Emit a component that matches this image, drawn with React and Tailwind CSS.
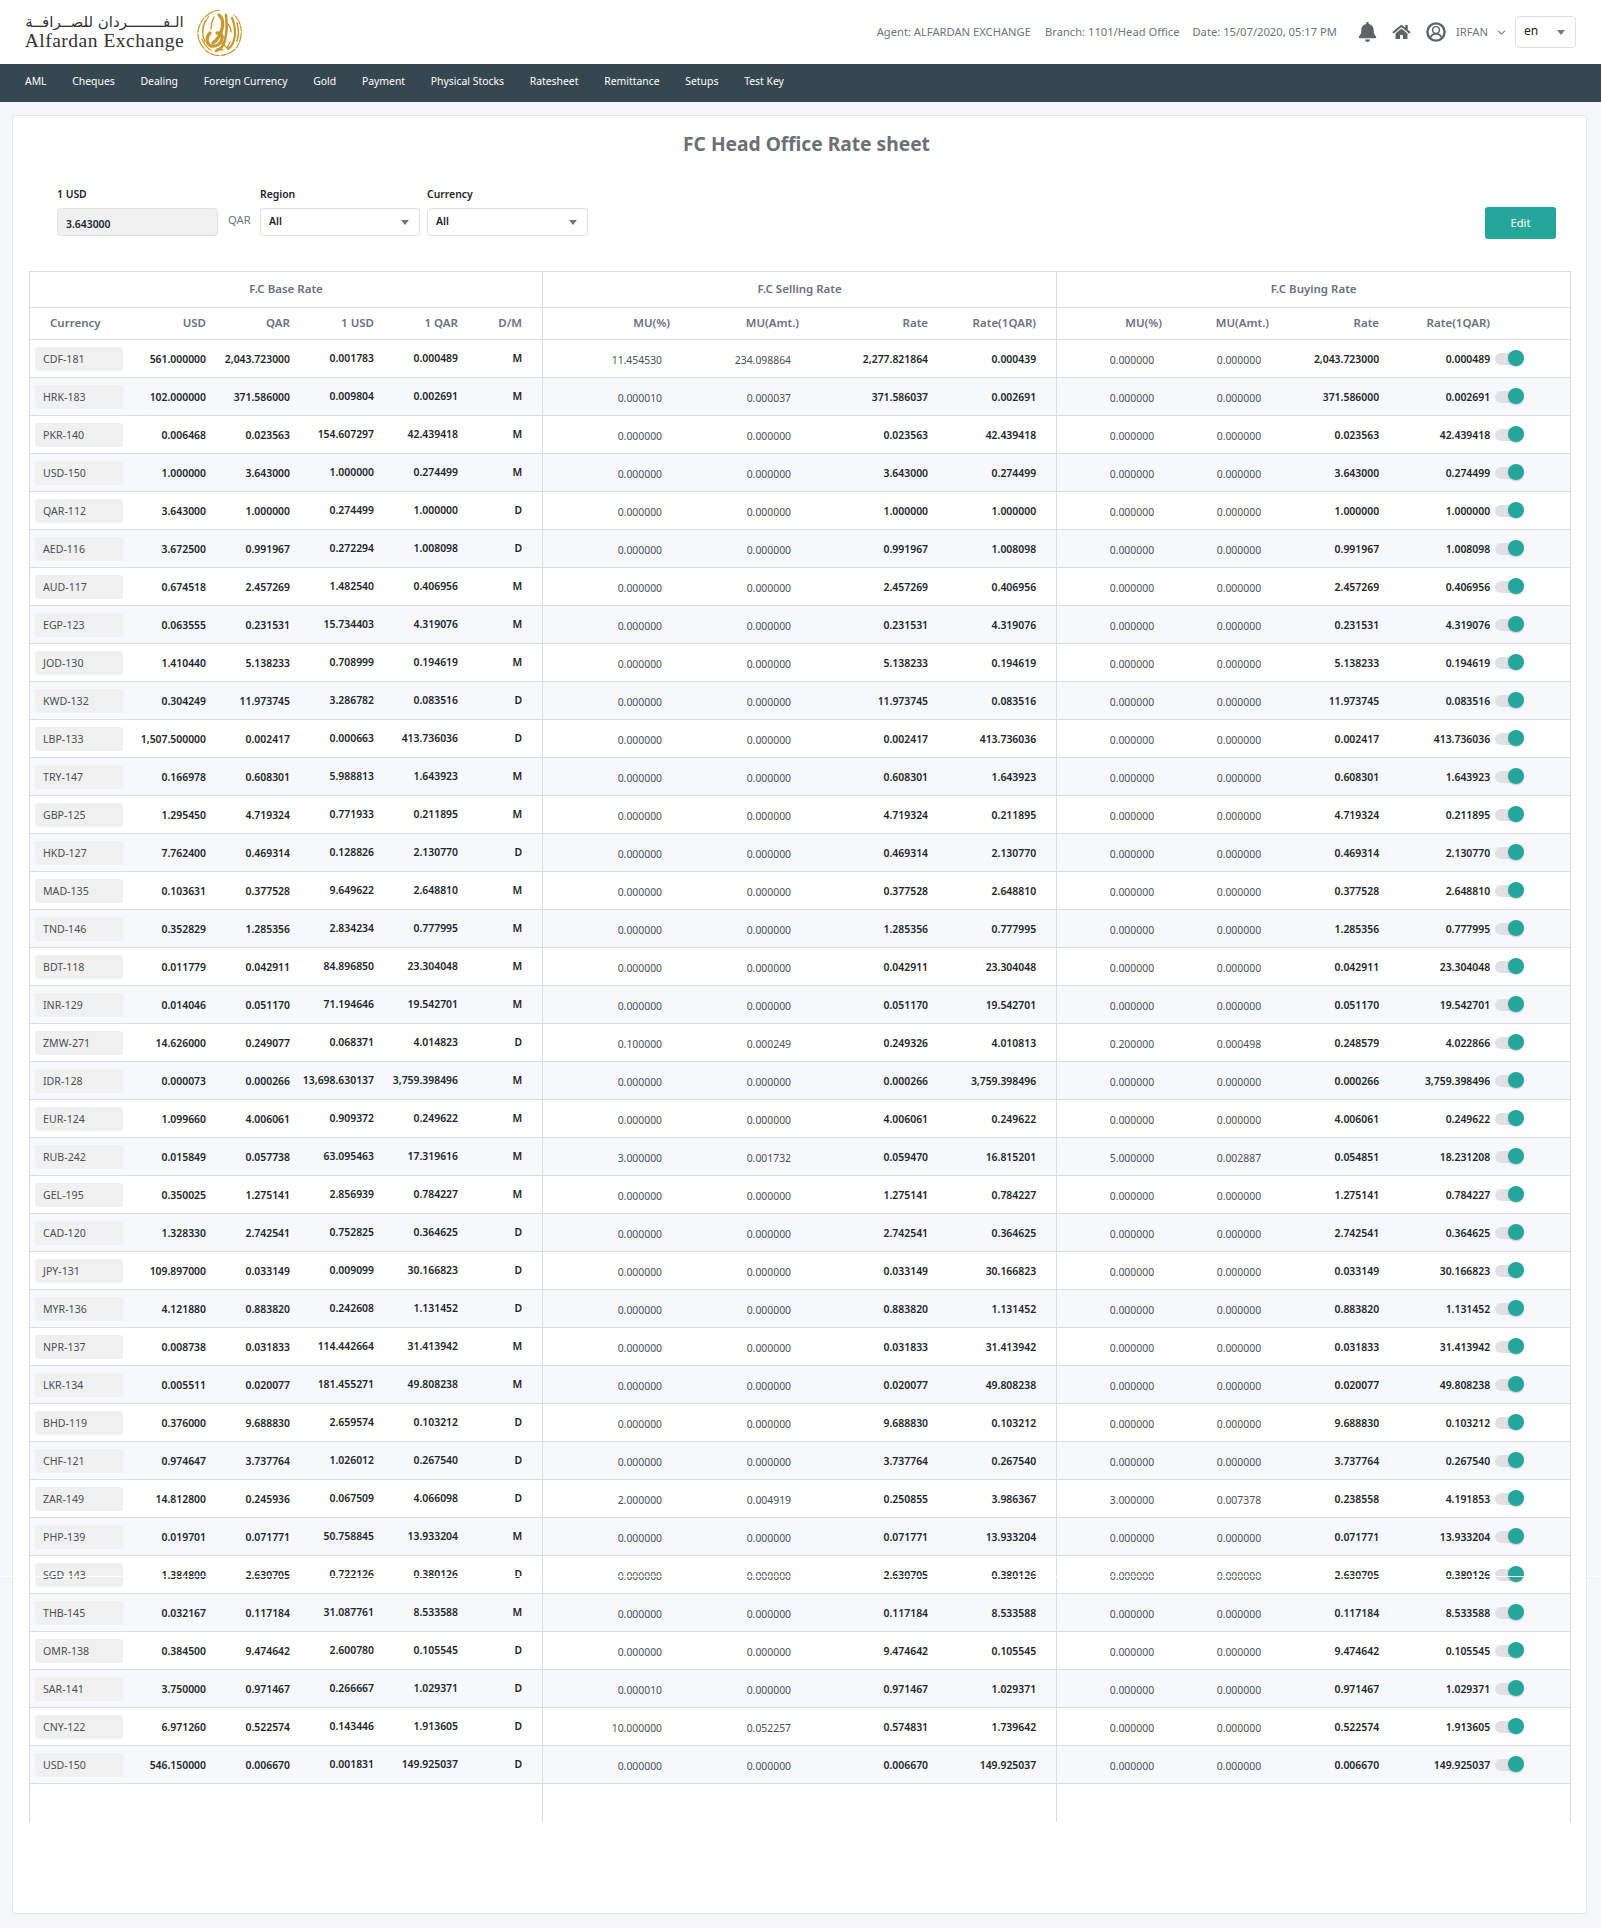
import { ChevronDown } from "lucide-react";
import { FaBell, FaHome } from "react-icons/fa";

const navItems = ["AML", "Cheques", "Dealing", "Foreign Currency", "Gold", "Payment", "Physical Stocks", "Ratesheet", "Remittance", "Setups", "Test Key"];

const Z = "0.000000";

// cur, usd, qar, 1usd, 1qar, d/m, optional sell [mu, amt, rate, 1qar], optional buy [mu, amt, rate, 1qar]
const rows = [
  ["CDF-181", "561.000000", "2,043.723000", "0.001783", "0.000489", "M", ["11.454530", "234.098864", "2,277.821864", "0.000439"]],
  ["HRK-183", "102.000000", "371.586000", "0.009804", "0.002691", "M", ["0.000010", "0.000037", "371.586037", "0.002691"]],
  ["PKR-140", "0.006468", "0.023563", "154.607297", "42.439418", "M"],
  ["USD-150", "1.000000", "3.643000", "1.000000", "0.274499", "M"],
  ["QAR-112", "3.643000", "1.000000", "0.274499", "1.000000", "D"],
  ["AED-116", "3.672500", "0.991967", "0.272294", "1.008098", "D"],
  ["AUD-117", "0.674518", "2.457269", "1.482540", "0.406956", "M"],
  ["EGP-123", "0.063555", "0.231531", "15.734403", "4.319076", "M"],
  ["JOD-130", "1.410440", "5.138233", "0.708999", "0.194619", "M"],
  ["KWD-132", "0.304249", "11.973745", "3.286782", "0.083516", "D"],
  ["LBP-133", "1,507.500000", "0.002417", "0.000663", "413.736036", "D"],
  ["TRY-147", "0.166978", "0.608301", "5.988813", "1.643923", "M"],
  ["GBP-125", "1.295450", "4.719324", "0.771933", "0.211895", "M"],
  ["HKD-127", "7.762400", "0.469314", "0.128826", "2.130770", "D"],
  ["MAD-135", "0.103631", "0.377528", "9.649622", "2.648810", "M"],
  ["TND-146", "0.352829", "1.285356", "2.834234", "0.777995", "M"],
  ["BDT-118", "0.011779", "0.042911", "84.896850", "23.304048", "M"],
  ["INR-129", "0.014046", "0.051170", "71.194646", "19.542701", "M"],
  ["ZMW-271", "14.626000", "0.249077", "0.068371", "4.014823", "D", ["0.100000", "0.000249", "0.249326", "4.010813"], ["0.200000", "0.000498", "0.248579", "4.022866"]],
  ["IDR-128", "0.000073", "0.000266", "13,698.630137", "3,759.398496", "M"],
  ["EUR-124", "1.099660", "4.006061", "0.909372", "0.249622", "M"],
  ["RUB-242", "0.015849", "0.057738", "63.095463", "17.319616", "M", ["3.000000", "0.001732", "0.059470", "16.815201"], ["5.000000", "0.002887", "0.054851", "18.231208"]],
  ["GEL-195", "0.350025", "1.275141", "2.856939", "0.784227", "M"],
  ["CAD-120", "1.328330", "2.742541", "0.752825", "0.364625", "D"],
  ["JPY-131", "109.897000", "0.033149", "0.009099", "30.166823", "D"],
  ["MYR-136", "4.121880", "0.883820", "0.242608", "1.131452", "D"],
  ["NPR-137", "0.008738", "0.031833", "114.442664", "31.413942", "M"],
  ["LKR-134", "0.005511", "0.020077", "181.455271", "49.808238", "M"],
  ["BHD-119", "0.376000", "9.688830", "2.659574", "0.103212", "D"],
  ["CHF-121", "0.974647", "3.737764", "1.026012", "0.267540", "D"],
  ["ZAR-149", "14.812800", "0.245936", "0.067509", "4.066098", "D", ["2.000000", "0.004919", "0.250855", "3.986367"], ["3.000000", "0.007378", "0.238558", "4.191853"]],
  ["PHP-139", "0.019701", "0.071771", "50.758845", "13.933204", "M"],
  ["SGD-143", "1.384800", "2.630705", "0.722126", "0.380126", "D"],
  ["THB-145", "0.032167", "0.117184", "31.087761", "8.533588", "M"],
  ["OMR-138", "0.384500", "9.474642", "2.600780", "0.105545", "D"],
  ["SAR-141", "3.750000", "0.971467", "0.266667", "1.029371", "D", ["0.000010", Z, "0.971467", "1.029371"]],
  ["CNY-122", "6.971260", "0.522574", "0.143446", "1.913605", "D", ["10.000000", "0.052257", "0.574831", "1.739642"]],
  ["USD-150", "546.150000", "0.006670", "0.001831", "149.925037", "D"],
];

const widths = [100, 84, 84, 84, 84, 76, 136, 129, 129, 120, 114, 107, 110, 183];

function Logo() {
  return (
    <div className="flex items-center">
      <div className="w-[161px] text-center text-[#333]">
        <div dir="rtl" className="font-['DejaVu_Sans',sans-serif] text-[15px] leading-[18px] tracking-[0.45px]">الـفــــــــردان للصــرافــة</div>
        <div className="font-['Liberation_Serif',serif] text-[19.5px] leading-[20px] tracking-[0.5px] whitespace-nowrap">Alfardan Exchange</div>
      </div>
      <svg viewBox="0 0 45 47" className="ml-3 h-[47px] w-[45px]" fill="none" stroke="#c9982f" strokeLinecap="round">
        <path d="M22 1C10 3 2 12 1 23c-.5 10 6 20 16 23 10 2 21-2 25-12 4-9 3-21-5-28" strokeWidth="1.2" strokeDasharray="5 1.5 9 2" />
        <path d="M8 12c-3 6-3 14 0 21M12 7c-4 5-6 10-6 16M5 30c2 5 5 9 9 11" strokeWidth="1.2" />
        <path d="M22 6c4 3 5 10 2 17-2 5-5 9-8 11" strokeWidth="3.4" />
        <path d="M13 24c-4 4-4 11 1 13 5 1 10-2 11-7 1-4-2-7-5-6" strokeWidth="3.2" />
        <path d="M29 6c1 8 1 17-1 25-1 5-4 9-9 11" strokeWidth="2.6" />
        <path d="M35 9c3 7 4 15 2 22-1 4-3 7-6 9" strokeWidth="2.2" />
        <path d="M40 14c2 6 2 12 0 18" strokeWidth="1.6" />
        <path d="M17 8c-2 4-3 8-3 12M25 34l4 4M33 33l-3 6M31 15c2 2 3 5 3 8M20 40l6 1" strokeWidth="1.4" />
      </svg>
    </div>
  );
}

function UserIcon() {
  return (
    <svg viewBox="0 0 20 20" className="ml-[15px] h-[20px] w-[20px]" fill="none" stroke="#5f6368">
      <circle cx="10" cy="10" r="8.6" strokeWidth="2.4" />
      <circle cx="10" cy="8" r="3.4" strokeWidth="1.4" />
      <path d="M4.5 15.5c1-2.6 3-3.6 5.5-3.6s4.500 1 5.500 3.600" strokeWidth="1.6" />
    </svg>
  );
}

function TopBar() {
  return (
    <header className="flex h-16 items-center bg-white pl-6 pr-[25px]">
      <Logo />
      <div className="ml-auto flex items-center text-[11.2px] text-[#6c757d]">
        <span>Agent: ALFARDAN EXCHANGE</span>
        <span className="ml-[14px]">Branch: 1101/Head Office</span>
        <span className="ml-[13px]">Date: 15/07/2020, 05:17 PM</span>
        <FaBell className="ml-[21px] h-[20px] w-[19px] text-[#5f6368]" />
        <FaHome className="ml-[15px] h-[16px] w-[19px] text-[#5f6368]" />
        <UserIcon />
        <span className="ml-[10px]">IRFAN</span>
        <ChevronDown className="ml-[7px] h-[13px] w-[13px] text-[#343a40]" strokeWidth={1.8} />
        <div className="ml-[7px] flex h-8 w-[61px] items-center justify-between rounded-[4px] border border-[#dfe1e5] pl-2 pr-[10px] text-[12px] text-[#212529]">
          <span className="pb-[3px]">en</span>
          <span className="h-0 w-0 border-x-[4px] border-t-[5px] border-x-transparent border-t-[#777]" />
        </div>
      </div>
    </header>
  );
}

function NavBar() {
  return (
    <nav className="flex h-[38px] items-center gap-[25.75px] bg-[#37474f] pb-[2px] pl-[25px] text-[10.4px] text-white">
      {navItems.map((n) => (
        <span key={n}>{n}</span>
      ))}
    </nav>
  );
}

function Dropdown({ label, className }) {
  return (
    <div className={className}>
      <div className="h-[21px] text-[10.4px] font-semibold leading-[15px] text-[#212529]">{label}</div>
      <div className="flex h-[28px] items-center justify-between rounded-[4px] border border-[#dfe1e5] bg-white pl-2 pr-[10px] text-[10.4px] font-semibold text-[#212529]">
        <span>All</span>
        <span className="h-0 w-0 border-x-[4px] border-t-[5px] border-x-transparent border-t-[#777]" />
      </div>
    </div>
  );
}

function Filters() {
  return (
    <div className="flex h-[84px] items-start pl-[28px] pr-[14px]">
      <div className="w-[161px]">
        <div className="h-[21px] text-[10.4px] font-semibold leading-[15px] text-[#212529]">1 USD</div>
        <input
          readOnly
          value="3.643000"
          className="h-[28px] w-full rounded-[4px] border border-[#e2e2e2] bg-[#f0f0f0] pl-2 pt-[3px] text-[10.4px] font-semibold text-[#212529]"
        />
      </div>
      <span className="ml-[10px] mt-[25px] w-[32px] text-[11.2px] text-[#6c757d]">QAR</span>
      <Dropdown label="Region" className="w-[160px]" />
      <Dropdown label="Currency" className="ml-[7px] w-[161px]" />
      <button className="ml-auto mt-[20px] h-8 w-[71px] rounded-[3px] bg-[#26a69a] text-[11.2px] text-white">Edit</button>
    </div>
  );
}

function Toggle() {
  return (
    <span className="relative ml-[5px] mt-[1px] block h-3 w-6 shrink-0 rounded-full bg-[#dfe1e5]">
      <span className="absolute left-[13px] top-[-3px] h-4 w-4 rounded-full bg-[#26a69a] shadow-[0_1px_2px_rgba(0,0,0,0.2)]" />
    </span>
  );
}

const thBase = "h-8 border-b border-[#dcdfe3] pb-[2px] text-right text-[11.5px] font-semibold text-[#6b6f82]";
const tdBase = "h-[38px] border-b border-[#d9dce0] text-right text-[10.4px]";
const boldCell = "font-semibold text-[#212529]";
const muCell = "pr-4 pt-[4px] font-normal text-[#495057]";

function RateRow({ row, index }) {
  const [cur, usd, qar, u1, q1, dm, sell, buy] = row;
  const s = sell || [Z, Z, qar, q1];
  const b = buy || [Z, Z, qar, q1];
  const bg = index % 2 === 1 ? "bg-[#f7f8fc]" : "bg-white";
  return (
    <tr className={bg}>
      <td className={`${tdBase} pl-[5px] text-left`}>
        <div className="flex h-6 w-[88px] items-center rounded-[3px] bg-[#f0f0f0] pl-2 pt-[3px] text-[10.6px] text-[#4a4f55]">{cur}</div>
      </td>
      <td className={`${tdBase} ${boldCell} pr-2 pt-[2px]`}>{usd}</td>
      <td className={`${tdBase} ${boldCell} pr-2 pt-[2px]`}>{qar}</td>
      <td className={`${tdBase} ${boldCell} pr-2`}>{u1}</td>
      <td className={`${tdBase} ${boldCell} pr-2`}>{q1}</td>
      <td className={`${tdBase} ${boldCell} pr-5`}>{dm}</td>
      <td className={`${tdBase} ${muCell} border-l border-l-[#d9dce0]`}>{s[0]}</td>
      <td className={`${tdBase} ${muCell}`}>{s[1]}</td>
      <td className={`${tdBase} ${boldCell} pr-2 pt-[2px]`}>{s[2]}</td>
      <td className={`${tdBase} ${boldCell} pr-5 pt-[2px]`}>{s[3]}</td>
      <td className={`${tdBase} ${muCell} border-l border-l-[#d9dce0]`}>{b[0]}</td>
      <td className={`${tdBase} ${muCell}`}>{b[1]}</td>
      <td className={`${tdBase} ${boldCell} pr-2 pt-[2px]`}>{b[2]}</td>
      <td className={`${tdBase} ${boldCell}`}>
        <div className="flex items-center justify-end pr-[51px]">
          <span className="pt-[2px]">{b[3]}</span>
          <Toggle />
        </div>
      </td>
    </tr>
  );
}

function RateTable() {
  return (
    <table className="w-[1540px] table-fixed border-separate border-spacing-0 border-x border-t border-[#d9dce0]">
      <colgroup>
        {widths.map((w, i) => (
          <col key={i} style={{ width: w }} />
        ))}
      </colgroup>
      <thead>
        <tr>
          {[
            ["F.C Base Rate", 6, ""],
            ["F.C Selling Rate", 4, "border-l border-l-[#d9dce0]"],
            ["F.C Buying Rate", 4, "border-l border-l-[#d9dce0]"],
          ].map(([t, span, cls]) => (
            <th key={t} colSpan={span} className={`h-[36px] border-b border-[#dcdfe3] pb-[2px] text-center text-[11.5px] font-semibold text-[#6b6f82] ${cls}`}>
              {t}
            </th>
          ))}
        </tr>
        <tr>
          <th className={`${thBase} pl-5 !text-left`}>Currency</th>
          <th className={`${thBase} pr-2`}>USD</th>
          <th className={`${thBase} pr-2`}>QAR</th>
          <th className={`${thBase} pr-2`}>1 USD</th>
          <th className={`${thBase} pr-2`}>1 QAR</th>
          <th className={`${thBase} pr-5`}>D/M</th>
          <th className={`${thBase} border-l border-l-[#d9dce0] pr-2`}>MU(%)</th>
          <th className={`${thBase} pr-2`}>MU(Amt.)</th>
          <th className={`${thBase} pr-2`}>Rate</th>
          <th className={`${thBase} pr-5`}>Rate(1QAR)</th>
          <th className={`${thBase} border-l border-l-[#d9dce0] pr-2`}>MU(%)</th>
          <th className={`${thBase} pr-2`}>MU(Amt.)</th>
          <th className={`${thBase} pr-2`}>Rate</th>
          <th className={`${thBase} pr-[80px]`}>Rate(1QAR)</th>
        </tr>
      </thead>
      <tbody>
        {rows.map((r, i) => (
          <RateRow key={i} row={r} index={i} />
        ))}
        <tr>
          <td colSpan={6} className="h-[38px]" />
          <td colSpan={4} className="border-l border-l-[#d9dce0]" />
          <td colSpan={4} className="border-l border-l-[#d9dce0]" />
        </tr>
      </tbody>
    </table>
  );
}

export default function App() {
  return (
    <div className="relative h-[1928px] bg-[#f4f6f9] font-['Noto_Sans',sans-serif]">
      <TopBar />
      <NavBar />
      <main className="ml-3 mr-[14px] mt-[13px] h-[1799px] rounded-[4px] border border-[#e3e6ea] bg-white px-4 pt-[14px]">
        <h1 className="h-[57px] pl-[14px] text-center text-[19.2px] font-bold leading-[28px] text-[#6c6f75]">FC Head Office Rate sheet</h1>
        <Filters />
        <RateTable />
      </main>
      {/* seam that runs across the capture */}
      <div className="absolute inset-x-0 top-[1576px] h-px bg-white" />
    </div>
  );
}
